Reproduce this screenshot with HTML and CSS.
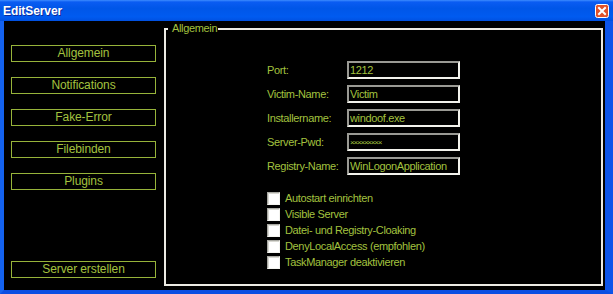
FILE: index.html
```html
<!DOCTYPE html>
<html lang="de">
<head>
    <meta charset="UTF-8">
    <meta name="viewport" content="width=device-width, initial-scale=1.0">
    <title>EditServer</title>
    <link rel="stylesheet" href="styles.css">
</head>
<body>
    <div class="window">
        <div class="titlebar">
            <span class="title">EditServer</span>
            <button class="close" aria-label="Schließen">
                <svg width="14" height="14" viewBox="0 0 14 14">
                    <rect x="0.5" y="0.5" width="13" height="13" rx="2" fill="#e2522a" stroke="#ffffff"/>
                    <path d="M4 4 L10 10 M10 4 L4 10" stroke="#ffffff" stroke-width="2" stroke-linecap="square"/>
                </svg>
            </button>
        </div>
        <div class="frame">
            <div class="client">
                <nav class="sidebar">
                    <button class="side-btn">Allgemein</button>
                    <button class="side-btn">Notifications</button>
                    <button class="side-btn">Fake-Error</button>
                    <button class="side-btn">Filebinden</button>
                    <button class="side-btn">Plugins</button>
                    <button class="side-btn build">Server erstellen</button>
                </nav>
                <fieldset class="group">
                    <legend>Allgemein</legend>
                    <div class="fields">
                        <label for="port">Port:</label>
                        <input id="port" type="text" value="1212">
                        <label for="victim">Victim-Name:</label>
                        <input id="victim" type="text" value="Victim">
                        <label for="install">Installername:</label>
                        <input id="install" type="text" value="windoof.exe">
                        <label for="pwd">Server-Pwd:</label>
                        <input id="pwd" class="pwd" type="text" value="×××××××××">
                        <label for="reg">Registry-Name:</label>
                        <input id="reg" type="text" value="WinLogonApplication">
                    </div>
                    <div class="options">
                        <label class="option"><input type="checkbox">Autostart einrichten</label>
                        <label class="option"><input type="checkbox">Visible Server</label>
                        <label class="option"><input type="checkbox">Datei- und Registry-Cloaking</label>
                        <label class="option"><input type="checkbox">DenyLocalAccess (empfohlen)</label>
                        <label class="option"><input type="checkbox">TaskManager deaktivieren</label>
                    </div>
                </fieldset>
            </div>
        </div>
    </div>
</body>
</html>
```

FILE: styles.css
```css
body {
  margin: 0;
  padding: 0;
  background-color: #000;
  font-family: "Liberation Sans", Arial, sans-serif;
}

.window {
  width: 613px;
  height: 294px;
  display: flex;
  flex-direction: column;
}

.titlebar {
  height: 21px;
  display: flex;
  align-items: center;
  justify-content: space-between;
  padding: 0 4px 0 3px;
  background: linear-gradient(to bottom, #3d8cff 0, #0a5cf2 2px, #0056e8 40%, #005bf0 80%, #0050e0 100%);
}

.title {
  color: #fff;
  font-size: 12px;
  font-weight: bold;
  letter-spacing: -0.1px;
  text-shadow: 1px 1px 0 #0a2a9c;
}

.close {
  width: 14px;
  height: 14px;
  padding: 0;
  border: none;
  background: none;
  display: flex;
}

.frame {
  flex: 1;
  display: flex;
  border-left: 4px solid #1462f0;
  border-right: 8px solid #0d55ea;
  border-bottom: 4px solid #0b4ee2;
}

.client {
  flex: 1;
  display: flex;
  background-color: #000;
}

.sidebar {
  width: 153px;
  padding: 24px 0 12px 7px;
  display: flex;
  flex-direction: column;
  gap: 15px;
}

.side-btn {
  width: 145px;
  height: 17px;
  padding: 0;
  border: 1px solid #97b33a;
  background: transparent;
  color: #a3c23f;
  font-family: "Liberation Sans", Arial, sans-serif;
  font-size: 12px;
  letter-spacing: -0.1px;
  line-height: 15px;
}

.side-btn.build {
  margin-top: auto;
}

.group {
  flex: 1;
  margin: 1px 2px 4px 0;
  padding: 0;
  min-width: 0;
  border: 2px solid #ecebe4;
}

.group legend {
  margin-left: 2px;
  padding: 0 1px 0 4px;
  color: #a3c23f;
  font-size: 11px;
  letter-spacing: -0.35px;
  line-height: 13px;
}

.fields {
  display: grid;
  grid-template-columns: 80px 113px;
  row-gap: 6px;
  margin: 26px 0 0 101px;
}

.fields label {
  align-self: center;
  color: #a3c23f;
  font-size: 11px;
  letter-spacing: -0.35px;
}

.fields input {
  height: 18px;
  box-sizing: border-box;
  margin: 0;
  padding: 0 1px;
  border: 2px solid;
  border-color: #9a9a94 #f2f2ec #f2f2ec #9a9a94;
  background-color: #000;
  color: #a3c23f;
  font-family: "Liberation Sans", Arial, sans-serif;
  font-size: 11px;
  letter-spacing: -0.35px;
  outline: none;
}

.fields input.pwd {
  font-size: 8px;
  letter-spacing: -1.2px;
}

.options {
  display: flex;
  flex-direction: column;
  margin: 15px 0 0 101px;
}

.option {
  height: 16px;
  display: flex;
  align-items: center;
  gap: 5px;
  color: #a3c23f;
  font-size: 11px;
  letter-spacing: -0.35px;
}

.option input {
  appearance: none;
  width: 13px;
  height: 13px;
  margin: 0;
  border: 1px solid;
  border-color: #a8a8a2 #f4f4f0 #f4f4f0 #a8a8a2;
  background-color: #fff;
  box-shadow: inset 1px 1px 0 #d8d8d2;
}
```
